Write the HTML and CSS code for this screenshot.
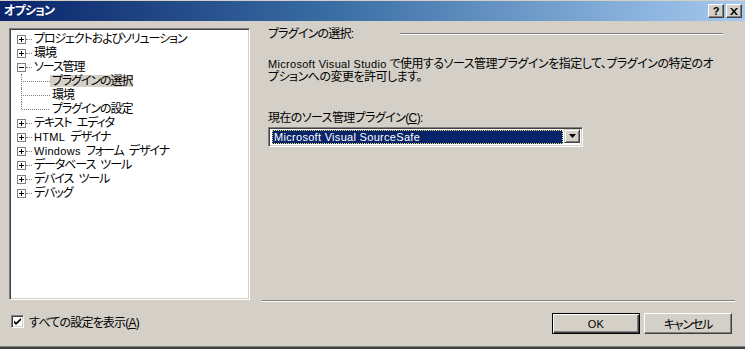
FILE: index.html
```html
<!DOCTYPE html>
<html lang="ja">
<head>
<meta charset="utf-8">
<title>オプション</title>
<link rel="stylesheet" href="styles.css">
</head>
<body>
<div class="window">
  <div class="titlebar">
    <span class="title">オプション</span>
    <div class="tbtns">
      <span class="tbtn">?</span>
      <span class="tbtn"><svg width="8" height="7" viewBox="0 0 8 7"><path d="M0 0h2l2 2.5L6 0h2L5 3.5 8 7H6L4 4.5 2 7H0l3-3.5z" fill="#000"/></svg></span>
    </div>
  </div>
  <div class="content">
    <div class="left">
      <div class="tree">
        <div class="row"><span class="exp plus"></span><span class="hl"></span><span class="txt">プロジェクトおよびソリューション</span></div>
        <div class="row"><span class="exp plus"></span><span class="hl"></span><span class="txt">環境</span></div>
        <div class="row"><span class="exp minus"></span><span class="hl"></span><span class="txt">ソース管理</span></div>
        <div class="row child"><span class="branch"></span><span class="txt sel">プラグインの選択</span></div>
        <div class="row child"><span class="branch"></span><span class="txt">環境</span></div>
        <div class="row child"><span class="branch last"></span><span class="txt">プラグインの設定</span></div>
        <div class="row"><span class="exp plus"></span><span class="hl"></span><span class="txt">テキスト エディタ</span></div>
        <div class="row"><span class="exp plus"></span><span class="hl"></span><span class="txt"><span class="lat">HTML</span> デザイナ</span></div>
        <div class="row"><span class="exp plus"></span><span class="hl"></span><span class="txt"><span class="lat">Windows</span> フォーム デザイナ</span></div>
        <div class="row"><span class="exp plus"></span><span class="hl"></span><span class="txt">データベース ツール</span></div>
        <div class="row"><span class="exp plus"></span><span class="hl"></span><span class="txt">デバイス ツール</span></div>
        <div class="row"><span class="exp plus"></span><span class="hl"></span><span class="txt">デバッグ</span></div>
      </div>
      <div class="check">
        <span class="cbox"><svg width="9" height="9" viewBox="0 0 9 9"><path d="M1 3.5l2 2L8 1v2.2L3 8 1 6z" fill="#000"/></svg></span>
        <span class="cl">すべての設定を表示(<u>A</u>)</span>
      </div>
    </div>
    <div class="right">
      <div class="main">
        <div class="heading"><span class="ht">プラグインの選択:</span><span class="etch"></span></div>
        <p class="desc"><span class="lat">Microsoft Visual Studio</span> で使用するソース管理プラグインを指定して、プラグインの特定のオ<br>プションへの変更を許可します。</p>
        <div class="lbl">現在のソース管理プラグイン(<u>C</u>):</div>
        <div class="combo">
          <div class="field"><span class="selected"><span class="lat">Microsoft Visual SourceSafe</span></span></div>
          <span class="drop"><svg width="7" height="4" viewBox="0 0 7 4"><path d="M0 0h7L3.5 4z" fill="#000"/></svg></span>
        </div>
      </div>
      <div class="sep"></div>
      <div class="buttons">
        <div class="btn default"><span class="lat">OK</span></div>
        <div class="btn"><span class="bt">キャンセル</span></div>
      </div>
    </div>
  </div>
</div>
</body>
</html>
```
FILE: styles.css
```css
* { box-sizing: border-box; }
html, body { margin: 0; padding: 0; background: #d4d0c8; }
body {
  font-family: "Liberation Sans", "Noto Sans CJK JP", sans-serif;
  font-size: 12px;
  font-feature-settings: "palt" 1;
  color: #000;
}
.lat { font-size: 11px; letter-spacing: 0.3px; }
u { text-decoration: underline; text-underline-offset: 1px; }

.window {
  width: 745px;
  height: 349px;
  background: #d4d0c8;
  border-top: 1px solid #d4d0c8;
  border-bottom: 2px solid #404040;
  box-shadow: inset 0 -1px 0 #808080;
  display: flex;
  flex-direction: column;
  overflow: hidden;
}

.titlebar {
  height: 20px;
  background: linear-gradient(to right, #0a246a 0%, #3a6ea5 45%, #a6caf0 100%);
  display: flex;
  align-items: center;
  padding: 0 3px 0 4px;
}
.title {
  color: #fff;
  font-weight: bold;
  font-size: 12px;
  line-height: 14px;
  letter-spacing: -0.8px;
  flex: 1;
}
.tbtns { display: flex; gap: 2px; }
.tbtn {
  width: 16px;
  height: 14px;
  background: #d4d0c8;
  border-top: 1px solid #fff;
  border-left: 1px solid #fff;
  border-right: 1px solid #404040;
  border-bottom: 1px solid #404040;
  box-shadow: inset -1px -1px 0 #808080;
  display: flex;
  align-items: center;
  justify-content: center;
  font-family: "Liberation Sans", sans-serif;
  font-weight: bold;
  font-size: 11px;
  line-height: 11px;
}

.content {
  flex: 1;
  display: flex;
  gap: 12px;
  padding: 7px 10px 0 9px;
}

.left { width: 241px; display: flex; flex-direction: column; }
.tree {
  height: 272px;
  background: #fff;
  border-top: 1px solid #808080;
  border-left: 1px solid #808080;
  border-right: 1px solid #fff;
  border-bottom: 1px solid #fff;
  box-shadow: inset 1px 1px 0 #404040, inset -1px -1px 0 #d4d0c8;
  padding-top: 3px;
  padding-left: 1px;
}
.row {
  height: 14px;
  display: flex;
  align-items: center;
  white-space: nowrap;
}
.exp {
  margin-left: 6px;
  width: 9px;
  height: 9px;
  border: 1px solid #808080;
  background: #fff;
  position: relative;
  flex: none;
}
.exp::before {
  content: "";
  position: absolute;
  left: 1px; top: 3px;
  width: 5px; height: 1px;
  background: #000;
}
.exp.plus::after {
  content: "";
  position: absolute;
  left: 3px; top: 1px;
  width: 1px; height: 5px;
  background: #000;
}
.hl {
  width: 6px;
  border-top: 1px dotted #808080;
  flex: none;
}
.txt {
  padding: 0 1px 0 2px;
  line-height: 12px;
  height: 12px;
  letter-spacing: -1.1px;
  word-spacing: 3px;
}
.txt .lat { letter-spacing: 0.3px; }
.row.child { padding-left: 10px; }
.branch {
  width: 29px;
  height: 14px;
  position: relative;
  flex: none;
  border-left: 1px dotted #808080;
}
.branch.last { border-left: none; }
.branch.last::before {
  content: "";
  position: absolute;
  left: 0; top: 0;
  height: 7px;
  border-left: 1px dotted #808080;
}
.branch::after {
  content: "";
  position: absolute;
  left: 1px; top: 7px;
  width: 27px;
  border-top: 1px dotted #808080;
}
.txt.sel { background: #d4d0c8; }

.check {
  margin-top: 15px;
  display: flex;
  align-items: center;
  gap: 5px;
  padding-left: 2px;
  height: 13px;
}
.cl { letter-spacing: -0.8px; }
.cbox {
  width: 13px;
  height: 13px;
  background: #fff;
  border-top: 1px solid #808080;
  border-left: 1px solid #808080;
  border-right: 1px solid #fff;
  border-bottom: 1px solid #fff;
  box-shadow: inset 1px 1px 0 #404040, inset -1px -1px 0 #d4d0c8;
  display: flex;
  align-items: center;
  justify-content: center;
  flex: none;
}

.right { flex: 1; display: flex; flex-direction: column; }
.main { height: 272px; padding-left: 6px; }
.heading {
  display: flex;
  align-items: center;
  height: 12px;
  line-height: 12px;
}
.ht { letter-spacing: -0.8px; }
.etch {
  margin-left: auto;
  margin-right: 12px;
  width: 323px;
  height: 2px;
  border-top: 1px solid #808080;
  border-bottom: 1px solid #fff;
}
.desc {
  margin: 18px 0 0;
  line-height: 13px;
  white-space: nowrap;
  letter-spacing: -0.5px;
}
.desc .lat { letter-spacing: 0.3px; }
.lbl {
  margin-top: 28px;
  line-height: 12px;
  height: 12px;
  letter-spacing: -0.6px;
}
.combo {
  margin-top: 3px;
  width: 315px;
  height: 20px;
  display: flex;
  background: #fff;
  border-top: 1px solid #808080;
  border-left: 1px solid #808080;
  border-right: 1px solid #fff;
  border-bottom: 1px solid #fff;
  box-shadow: inset 1px 1px 0 #404040, inset -1px -1px 0 #d4d0c8;
  padding: 2px;
}
.field { flex: 1; padding: 0 1px; display: flex; }
.selected {
  flex: 1;
  background: #0a246a;
  color: #fff;
  border: 1px dotted #e8e070;
  line-height: 12px;
  padding-left: 1px;
}
.drop {
  width: 16px;
  height: 14px;
  margin-top: -1px;
  background: #d4d0c8;
  border-top: 1px solid #d4d0c8;
  border-left: 1px solid #d4d0c8;
  border-right: 1px solid #404040;
  border-bottom: 1px solid #404040;
  box-shadow: inset 1px 1px 0 #fff, inset -1px -1px 0 #808080;
  display: flex;
  align-items: center;
  justify-content: center;
}

.sep {
  height: 2px;
  border-top: 1px solid #808080;
  border-bottom: 1px solid #fff;
}
.buttons {
  margin-top: 11px;
  display: flex;
  justify-content: flex-end;
  gap: 4px;
  padding-right: 3px;
}
.btn {
  width: 88px;
  height: 21px;
  display: flex;
  align-items: center;
  justify-content: center;
  background: #d4d0c8;
  border-top: 1px solid #fff;
  border-left: 1px solid #fff;
  border-right: 1px solid #404040;
  border-bottom: 1px solid #404040;
  box-shadow: inset -1px -1px 0 #808080;
}
.bt { letter-spacing: -1.2px; }
.btn.default {
  border: 1px solid #000;
  box-shadow: inset 1px 1px 0 #fff, inset -1px -1px 0 #404040, inset -2px -2px 0 #808080;
}
```
